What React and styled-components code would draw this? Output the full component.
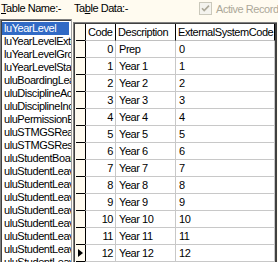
import React from "react";
import styled, { createGlobalStyle } from "styled-components";

const GlobalStyle = createGlobalStyle`
  html, body {
    margin: 0;
    padding: 0;
    background: #fffbf0;
  }
  body {
    font-family: "Liberation Sans", Arial, sans-serif;
    font-size: 11px;
    letter-spacing: -0.45px;
    color: #000;
    overflow: hidden;
  }
`;

const Form = styled.div`
  width: 278px;
  height: 262px;
  overflow: hidden;
  display: grid;
  grid-template-columns: 72px 1fr;
  grid-template-rows: 19px 1fr;
  column-gap: 1px;
  background: #fffbf0;
`;

const Label = styled.div`
  line-height: 13px;
  padding: 2px 0 0 ${(p) => p.$indent || 0}px;
  white-space: nowrap;
`;

const TopRight = styled.div`
  display: grid;
  grid-template-columns: 126px 1fr;
  white-space: nowrap;
  overflow: hidden;
`;

const CheckRow = styled.label`
  display: flex;
  align-items: center;
  gap: 4px;
  padding-top: 2px;
  height: 13px;
  color: #aca899;
  white-space: nowrap;
`;

const ListBox = styled.div`
  background: #fff;
  border-top: 1px solid #808080;
  border-left: 1px solid #808080;
  border-right: 1px solid #a0a0a0;
  box-shadow: inset 1px 1px 0 #404040;
  padding: 2px 2px 0 1px;
  overflow: hidden;
`;

const ListItem = styled.div`
  height: 13px;
  line-height: 13px;
  padding-left: 2px;
  white-space: nowrap;
  background: ${(p) => (p.$selected ? "#316ac5" : "transparent")};
  color: ${(p) => (p.$selected ? "#fff" : "#000")};
`;

const GridBox = styled.div`
  margin-top: 3px;
  width: 202px;
  align-self: stretch;
  overflow: hidden;
  border-top: 1px solid #808080;
  border-left: 1px solid #808080;
  padding: 1px 0 0 1px;
  background: #404040;
`;

const Table = styled.table`
  border-collapse: separate;
  border-spacing: 0;
  table-layout: fixed;
  width: 200px;
  background: #fff;
`;

const IndicatorCell = styled.td`
  width: 10px;
  height: 16px;
  padding: 0;
  border-right: 1px solid #000;
  border-bottom: 1px solid transparent;
  background: linear-gradient(#000, #000) no-repeat right 0 bottom -1px / calc(100% - 1px) 1px,
    #fffbf0;
  vertical-align: middle;
`;

const HeadCell = styled.th`
  width: ${(p) => p.$w}px;
  height: 16px;
  padding: 0 1px 0 2px;
  font-weight: normal;
  text-align: left;
  white-space: nowrap;
  overflow: hidden;
  border-right: 1px solid #000;
  border-bottom: 1px solid #c0c0c0;
  background: #fff;
`;

const Cell = styled.td`
  height: 16px;
  padding: ${(p) => (p.$right ? "0 2px 0 0" : "0 0 0 3px")};
  text-align: ${(p) => (p.$right ? "right" : "left")};
  white-space: nowrap;
  overflow: hidden;
  border-right: 1px solid #c8c8c8;
  border-bottom: 1px solid #c8c8c8;
  line-height: 16px;
`;

const Pointer = styled.span`
  display: block;
  width: 0;
  height: 0;
  margin-left: 3px;
  border-left: 5px solid #000;
  border-top: 4px solid transparent;
  border-bottom: 4px solid transparent;
`;

const tables = [
  "luYearLevel",
  "luYearLevelExternal",
  "luYearLevelGroup",
  "luYearLevelStage",
  "uluBoardingLeave",
  "uluDisciplineAction",
  "uluDisciplineIncident",
  "uluPermissionEvent",
  "uluSTMGSReason",
  "uluSTMGSResult",
  "uluStudentBoarding",
  "uluStudentLeave",
  "uluStudentLeave",
  "uluStudentLeave",
  "uluStudentLeave",
  "uluStudentLeave",
  "uluStudentLeave",
  "uluStudentLeave",
  "uluStudentLeave",
];

const rows = Array.from({ length: 13 }, (_, i) => ({
  code: i,
  description: i === 0 ? "Prep" : `Year ${i}`,
  external: i,
}));

function DisabledCheck() {
  return (
    <svg width="13" height="13" viewBox="0 0 13 13">
      <rect x="0.5" y="0.5" width="12" height="12" fill="#f4f3ee" stroke="#cac8bb" />
      <path d="M3 6.2 L5.2 8.6 L10 3.6" fill="none" stroke="#aca899" strokeWidth="1.6" />
    </svg>
  );
}

export default function App() {
  return (
    <>
      <GlobalStyle />
      <Form>
        <Label $indent={1}>
          <u>T</u>able Name:-
        </Label>
        <TopRight>
          <Label $indent={1}>
            Ta<u>b</u>le Data:-
          </Label>
          <CheckRow>
            <DisabledCheck />
            Active Records
          </CheckRow>
        </TopRight>

        <ListBox>
          {tables.map((name, i) => (
            <ListItem key={i} $selected={i === 0}>
              {name}
            </ListItem>
          ))}
        </ListBox>

        <GridBox>
          <Table>
            <thead>
              <tr>
                <IndicatorCell as="th" />
                <HeadCell $w={26}>Code</HeadCell>
                <HeadCell $w={56}>Description</HeadCell>
                <HeadCell $w={95}>ExternalSystemCode</HeadCell>
              </tr>
            </thead>
            <tbody>
              {rows.map((r) => (
                <tr key={r.code}>
                  <IndicatorCell>{r.code === 12 && <Pointer />}</IndicatorCell>
                  <Cell $right>{r.code}</Cell>
                  <Cell>{r.description}</Cell>
                  <Cell>{r.external}</Cell>
                </tr>
              ))}
            </tbody>
          </Table>
        </GridBox>
      </Form>
    </>
  );
}
